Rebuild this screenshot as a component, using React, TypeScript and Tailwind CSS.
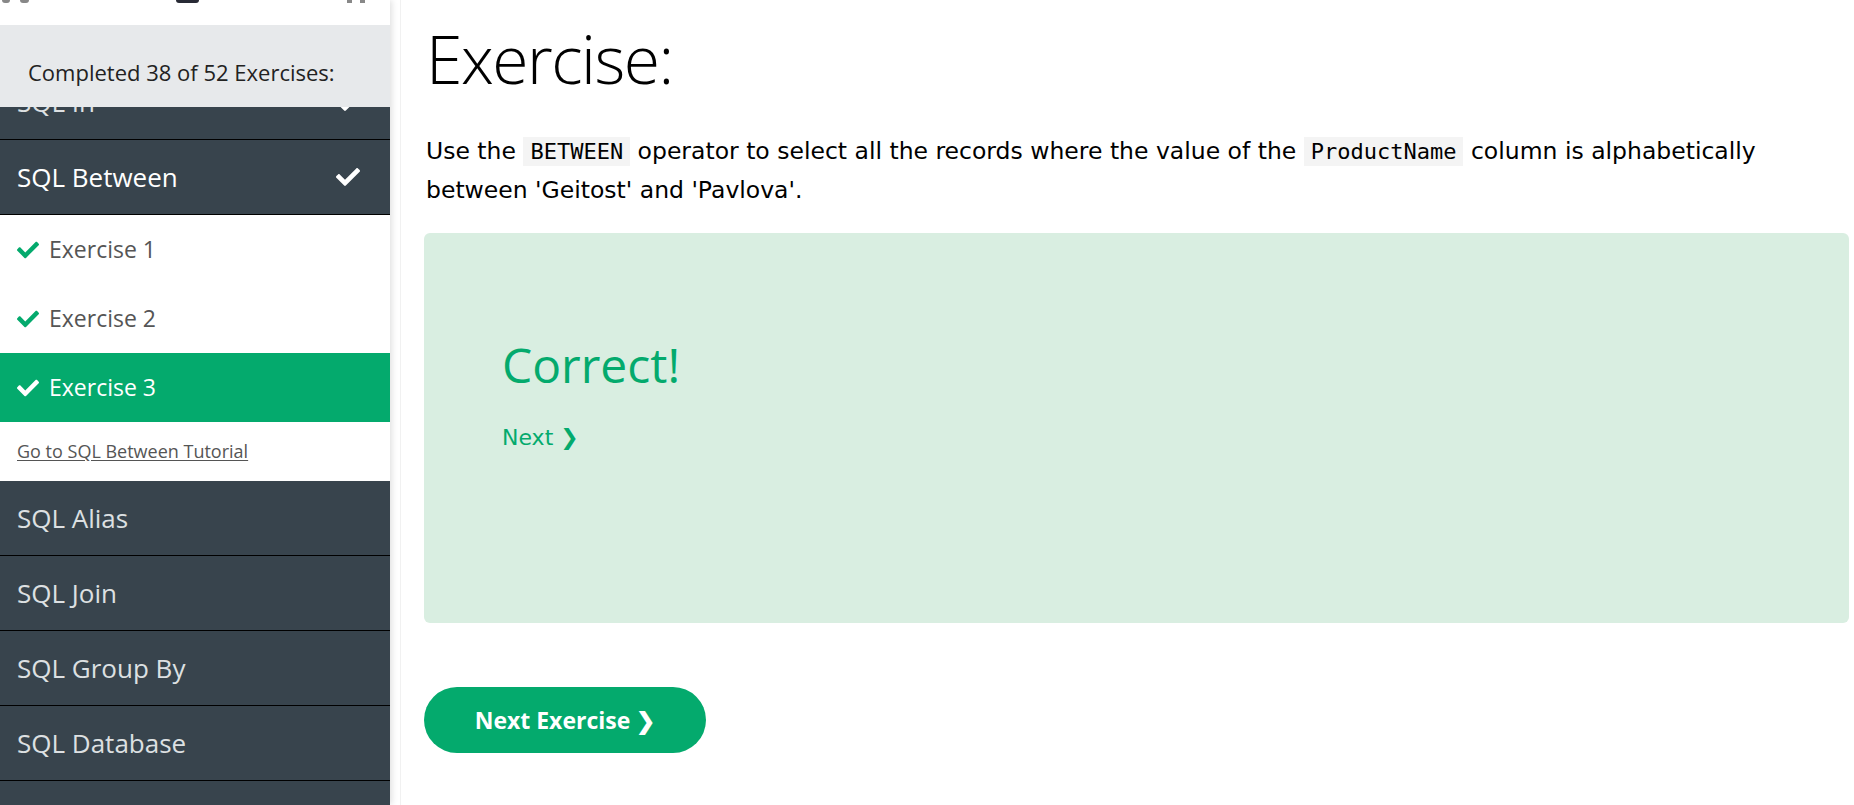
import { FaCheck } from "react-icons/fa";

const segoe = { fontFamily: '"Open Sans", "Noto Sans", sans-serif' };
const verdana = { fontFamily: '"DejaVu Sans", Verdana, sans-serif' };
const mono = { fontFamily: '"DejaVu Sans Mono", "Liberation Mono", monospace' };

function TopicRow({ title, done, active }: { title: string; done?: boolean; active?: boolean }) {
  return (
    <div className="h-[75px] flex items-center justify-between pl-[17px] pr-[30px] border-b border-black">
      <span className={`text-[26px] ${active ? "text-white" : "text-[#dde0e2]"}`}>{title}</span>
      {done && <FaCheck className="text-white text-[24px]" />}
    </div>
  );
}

function ExerciseRow({ n, active }: { n: number; active?: boolean }) {
  return (
    <div
      className={`h-[69px] flex items-center gap-[10px] pl-[17px] ${
        active ? "bg-[#04aa6d] text-white" : "bg-white text-[#555]"
      }`}
    >
      <FaCheck className={`text-[22px] ${active ? "text-white" : "text-[#04aa6d]"}`} />
      <span className="text-[23px]">Exercise {n}</span>
    </div>
  );
}

function Code({ children }: { children: string }) {
  return (
    <code className="bg-[#f4f4f4] px-[7px] py-[2px] text-[22px]" style={mono}>
      {children}
    </code>
  );
}

export default function App() {
  return (
    <div className="flex w-[1854px] h-[805px] overflow-hidden bg-white" style={segoe}>
      <aside className="w-[390px] shrink-0 flex flex-col bg-[#38444d] shadow-[2px_0_6px_rgba(0,0,0,0.12)] z-10">
        {/* top toolbar, scrolled mostly out of view */}
        <div className="h-[25px] bg-white relative shrink-0">
          <div className="absolute top-0 left-[2px] w-[8px] h-[3px] bg-[#888] rounded-b-sm" />
          <div className="absolute top-0 left-[20px] w-[9px] h-[3px] bg-[#888] rounded-b-sm" />
          <div className="absolute top-0 left-[176px] w-[23px] h-[3px] bg-[#282a35] rounded-b-[3px]" />
          <div className="absolute top-0 left-[347px] w-[5px] h-[3px] bg-[#888]" />
          <div className="absolute top-0 left-[360px] w-[5px] h-[3px] bg-[#888]" />
        </div>
        <div className="h-[82px] bg-[#e7e9eb] shrink-0 pl-[28px] pt-[31px] text-[22px] text-[#222]">
          Completed 38 of 52 Exercises:
        </div>
        <div className="flex-1 overflow-hidden">
          <div className="-mt-[42px]">
            <TopicRow title="SQL In" done />
            <TopicRow title="SQL Between" done active />
            <ExerciseRow n={1} />
            <ExerciseRow n={2} />
            <ExerciseRow n={3} active />
            <div className="h-[59px] bg-white flex items-center pl-[17px]">
              <a className="text-[18px] text-[#555] underline underline-offset-2">Go to SQL Between Tutorial</a>
            </div>
            <TopicRow title="SQL Alias" />
            <TopicRow title="SQL Join" />
            <TopicRow title="SQL Group By" />
            <TopicRow title="SQL Database" />
            <TopicRow title="SQL Create DB" />
          </div>
        </div>
      </aside>

      <div className="w-[10px] shrink-0" />

      <main className="flex-1 border-l border-[#f1f1f1] pl-[25px] pr-[5px] pt-[14px]">
        <h1 className="text-[66px] font-light leading-[88px] tracking-[-1.5px] text-black">Exercise:</h1>

        <p className="mt-[30px] text-[23.5px] leading-[38px] text-black pr-[60px]" style={verdana}>
          Use the <Code>BETWEEN</Code> operator to select all the records where the value of the{" "}
          <Code>ProductName</Code> column is alphabetically between 'Geitost' and 'Pavlova'.
        </p>

        <div className="mt-[24px] h-[390px] rounded-[6px] bg-[#d9eee1] pl-[78px] pt-[98px] -ml-[2px]">
          <div className="text-[48px] leading-[68px] text-[#04aa6d]">Correct!</div>
          <a className="mt-[22px] inline-block text-[22px] text-[#04aa6d]" style={verdana}>
            Next ❯
          </a>
        </div>

        <button className="mt-[64px] -ml-[2px] w-[282px] h-[66px] rounded-full bg-[#04aa6d] text-white text-[23px] font-bold">
          Next Exercise ❯
        </button>
      </main>
    </div>
  );
}
